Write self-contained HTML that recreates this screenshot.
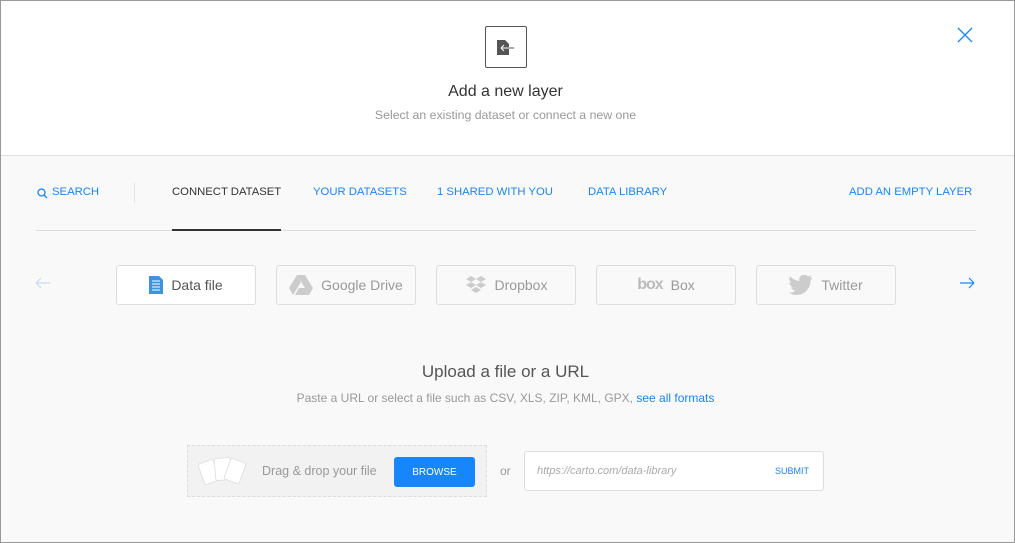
<!DOCTYPE html>
<html><head><style>
*{box-sizing:border-box;margin:0;padding:0}
body{width:1015px;height:543px;font-family:"Liberation Sans",sans-serif;background:#f9f9f9;position:relative;overflow:hidden}
.frame{position:absolute;inset:0;border:1px solid #999;pointer-events:none;z-index:10}
.top{position:absolute;left:0;top:0;width:1015px;height:156px;background:#fff;border-bottom:1px solid #ddd}
.abs{position:absolute}
.t{position:absolute;white-space:nowrap}
.tab{position:absolute;top:186px;font-size:11.3px;color:#1785fb}
.btn{position:absolute;top:265px;width:140px;height:40px;border:1px solid #ddd;border-radius:3px;font-size:14px;color:#999;display:flex;align-items:center;justify-content:center;gap:8px}
</style></head><body>
<div class="frame"></div>
<div class="top">
  <div class="abs" style="left:485px;top:26px;width:42px;height:42px;border:1px solid #555;border-radius:2px"></div>
  <svg class="abs" style="left:497px;top:40px" width="18" height="15" viewBox="0 0 18 15"><path d="M0 0H8L12 4V15H0Z" fill="#555"/><path d="M4 8H17M4 8L7 5M4 8L7 11" stroke="#fff" stroke-width="1" fill="none"/><path d="M12 8H17" stroke="#555" stroke-width="1"/></svg>
  <div class="t" style="left:0;width:1011px;text-align:center;top:83px;font-size:16px;color:#333">Add a new layer</div>
  <div class="t" style="left:0;width:1011px;text-align:center;top:108px;font-size:12.3px;color:#999">Select an existing dataset or connect a new one</div>
  <svg class="abs" style="left:957px;top:27px" width="16" height="16"><path d="M1 1L15 15M15 1L1 15" stroke="#1785fb" stroke-width="1.3"/></svg>
</div>
<svg class="abs" style="left:37px;top:188px" width="11" height="11"><circle cx="4.5" cy="4.5" r="3.5" stroke="#1785fb" stroke-width="1.3" fill="none"/><path d="M7 7L10 10" stroke="#1785fb" stroke-width="1.3"/></svg>
<div class="tab" style="left:52px">SEARCH</div>
<div class="abs" style="left:134px;top:183px;width:1px;height:20px;background:#e5e5e5"></div>
<div class="tab" style="left:172px;color:#333">CONNECT DATASET</div>
<div class="tab" style="left:313px">YOUR DATASETS</div>
<div class="tab" style="left:437px">1 SHARED WITH YOU</div>
<div class="tab" style="left:588px">DATA LIBRARY</div>
<div class="tab" style="left:849px">ADD AN EMPTY LAYER</div>
<div class="abs" style="left:36px;top:230px;width:940px;height:1px;background:#ddd"></div>
<div class="abs" style="left:172px;top:229px;width:109px;height:2px;background:#333"></div>
<svg class="abs" style="left:35px;top:277px" width="16" height="12"><path d="M1 6H15M1 6L6 1M1 6L6 11" stroke="#c9dcf5" stroke-width="1.2" fill="none"/></svg>
<svg class="abs" style="left:959px;top:277px" width="16" height="12"><path d="M1 6H15M15 6L10 1M15 6L10 11" stroke="#1785fb" stroke-width="1.2" fill="none"/></svg>
<div class="btn" style="left:116px;background:#fff;color:#555"><svg width="14" height="18"><path d="M0 0H10L14 4V18H0Z" fill="#3e93dc"/><path d="M3 5H11M3 8H11M3 11H11M3 14H11" stroke="#fff" stroke-width="1"/></svg>Data file</div>
<div class="btn" style="left:276px"><svg width="24" height="20"><path d="M8 0H16L24 13H16Z M8 0L12 7L4 20L0 13Z M6 20L10 13H24L20 20Z" fill="#ccc"/></svg>Google Drive</div>
<div class="btn" style="left:436px"><svg width="22" height="20"><path d="M6 1L11 4L6 7L1 4Z M16 1L21 4L16 7L11 4Z M6 7L11 10L6 13L1 10Z M16 7L21 10L16 13L11 10Z M6 15L11 12L16 15L11 18Z" fill="#ccc"/></svg>Dropbox</div>
<div class="btn" style="left:596px"><span style="font-weight:bold;color:#bbb;font-size:16px;letter-spacing:-1px">box</span>Box</div>
<div class="btn" style="left:756px"><svg width="24" height="20" viewBox="0 0 24 20"><path d="M23 2c-1 .5-2 .7-3 .8 1-.6 1.8-1.6 2-2.700-1 .6-2 1-3.200 1.200A5 5 0 0 0 10.300 6 14 14 0 0 1 1 1.300a5 5 0 0 0 1.500 6.600c-.8 0-1.600-.3-2.200-.6 0 2.400 1.700 4.400 4 4.800-.7.2-1.500.2-2.200.1.600 2 2.500 3.400 4.600 3.400A10 10 0 0 1 0 17.700 14 14 0 0 0 7.500 20c9 0 14-7.500 14-14v-.6C22.500 4.700 23 3.400 23 2z" fill="#ccc"/></svg>Twitter</div>
<div class="t" style="left:0;width:1011px;text-align:center;top:362px;font-size:17px;color:#555">Upload a file or a URL</div>
<div class="t" style="left:0;width:1011px;text-align:center;top:391px;font-size:12px;color:#999">Paste a URL or select a file such as CSV, XLS, ZIP, KML, GPX, <span style="color:#1785fb">see all formats</span></div>
<div class="abs" style="left:187px;top:445px;width:300px;height:52px;border:1px dashed #ddd;background:#f2f2f2"></div>
<svg class="abs" style="left:198px;top:455px" width="54" height="32"><g fill="#fff" stroke="#ddd" stroke-width=".8"><rect x="3" y="6" width="16" height="22" rx="2" transform="rotate(-20 11 17)"/><rect x="17" y="3" width="16" height="22" rx="2" transform="rotate(-5 25 14)"/><rect x="29" y="5" width="16" height="22" rx="2" transform="rotate(20 37 16)"/></g></svg>
<div class="t" style="left:262px;top:464px;font-size:12.5px;color:#999">Drag &amp; drop your file</div>
<div class="abs" style="left:394px;top:457px;width:81px;height:30px;background:#1785fb;border-radius:3px;color:#fff;font-size:10px;display:flex;align-items:center;justify-content:center">BROWSE</div>
<div class="t" style="left:500px;top:464px;font-size:12px;color:#999">or</div>
<div class="abs" style="left:524px;top:451px;width:300px;height:40px;border:1px solid #ddd;border-radius:3px;background:#fff"></div>
<div class="t" style="left:537px;top:465px;font-size:11px;color:#aaa;font-style:italic">https://carto.com/data-library</div>
<div class="t" style="left:775px;top:466px;font-size:9px;color:#1785fb">SUBMIT</div>
</body></html>
